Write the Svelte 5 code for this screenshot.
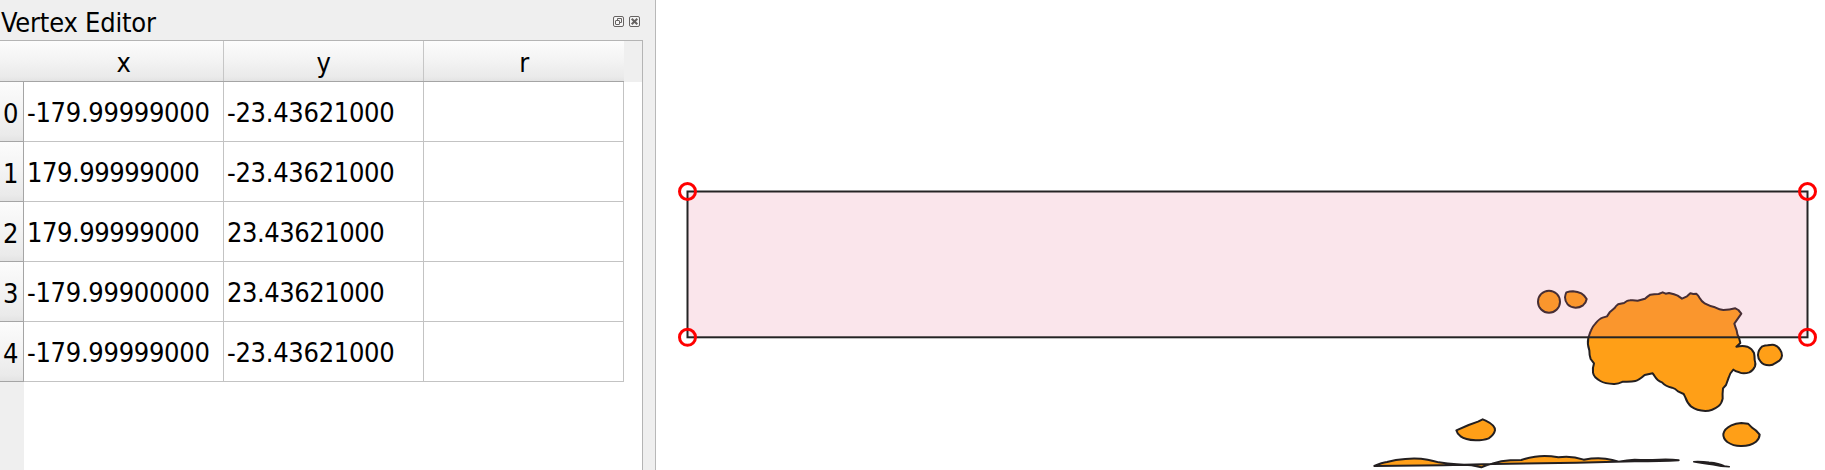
<script>
  const columns = ['x', 'y', 'r'];
  const rows = [
    ['-179.99999000', '-23.43621000', ''],
    ['179.99999000', '-23.43621000', ''],
    ['179.99999000', '23.43621000', ''],
    ['-179.99900000', '23.43621000', ''],
    ['-179.99999000', '-23.43621000', '']
  ];
  const handles = [[687.5, 191.5], [1807.5, 191.5], [687.5, 337.3], [1807.5, 337.3]];
</script>

<div class="window">
  <section class="panel">
    <header class="titlebar">
      <span class="title">Vertex Editor</span>
      <div class="tools">
        <svg width="11" height="11" viewBox="0 0 11 11" fill="none" stroke="#666362">
          <rect x=".5" y=".5" width="10" height="10" rx="1.5" fill="#f5f5f5" />
          <path d="M4.5 4.5v-2h4v4h-2" />
          <rect x="2.5" y="4.5" width="4" height="4" rx=".5" />
        </svg>
        <svg width="11" height="11" viewBox="0 0 11 11" fill="none" stroke="#666362">
          <rect x=".5" y=".5" width="10" height="10" rx="1.5" fill="#f5f5f5" />
          <path d="M2.7 2.7l5.6 5.6M8.3 2.7L2.7 8.3" stroke-width="2" />
        </svg>
      </div>
    </header>
    <div class="table">
      <div class="head">
        {#each columns as column}
          <div class="heading">{column}</div>
        {/each}
      </div>
      <div class="body">
        {#each rows as row, i}
          <div class="row">
            <div class="index">{i}</div>
            {#each row as value}
              <div class="cell" class:negative={value.startsWith('-')}>{value}</div>
            {/each}
          </div>
        {/each}
        <div class="gutter"></div>
      </div>
    </div>
  </section>

  <svg class="map" width="1169" height="470" viewBox="656 0 1169 470">
    <g transform="translate(1520 270) scale(.33333)" fill="#ff9f17" stroke="#231f20" stroke-width="6" stroke-linejoin="round">
      <ellipse cx="87" cy="95" rx="33" ry="33" />
      <path d="M139 67Q149 64 159 64Q173 65 184 70Q193 75 200 87Q198 99 189 106Q179 113 167 113Q151 112 143 103Q135 94 135 82Q136 73 139 67Z" />
      <path d="M205 204Q209 190 213 181Q218 169 226 161Q238 146 248 143L261 139L269 127L283 115Q289 106 294 103L312 99Q322 91 330 91Q342 90 353 92L375 86Q382 80 391 74Q402 72 416 72L428 67L437 71L447 69Q464 73 473 77L486 86L501 79L511 70L520 72L529 71Q535 76 539 84Q545 95 554 100Q569 108 585 112Q599 119 610 120Q628 120 646 115L655 120L664 131L643 161Q647 174 650 181Q651 194 657 203L661 219L649 230Q668 226 682 230Q696 236 702 249Q704 258 704 270Q708 282 705 289Q699 302 688 307Q670 313 658 307Q645 304 640 299Q630 309 626 323Q621 337 618 345L609 355Q607 373 608 386Q605 401 596 408Q577 423 556 423Q530 422 514 410Q502 400 496 382L491 372L474 364Q466 356 456 353Q437 349 426 337Q412 332 403 317L398 310L374 315Q356 331 346 333Q334 336 309 335Q293 343 281 342Q255 341 241 333Q221 322 219 308Q217 295 222 280L212 267Q208 258 208 241Q201 222 205 204Z" />
      <path d="M727 229Q736 226 743 226Q757 223 763 225Q774 228 780 239Q786 247 786 257Q785 267 778 272L765 280Q757 287 747 286Q730 286 722 275Q714 267 714 255Q715 239 727 229Z" />
      <path d="M634 466Q647 460 664 459L684 461L696 473Q710 481 719 494Q718 507 708 515Q691 528 665 528Q641 529 622 516Q609 505 610 492Q613 476 634 466Z" />
    </g>
    <g transform="translate(1360 400) scale(.33333)" fill="#ff9f17" stroke="#231f20" stroke-width="6" stroke-linejoin="round">
      <path d="M289 91L326 75L354 65L368 58L377 62Q406 76 405 91Q402 105 386 115Q371 121 347 121Q315 119 302 109Q292 103 289 91Z" />
      <path d="M43 198Q66 188 81 186Q107 179 136 177Q172 174 203 179Q220 182 236 187Q263 191 290 193L335 196L364 202Q379 195 396 191Q424 182 451 181L484 180Q503 173 525 170Q558 165 595 172Q633 166 671 179Q720 170 757 180L776 185Q801 181 824 179Q850 181 878 180Q925 176 956 181Q907 184 824 184L650 188L400 192L250 196Z" />
      <path d="M1001 185Q1025 184 1047 187Q1078 190 1093 198L1108 200Q1083 200 1060 194Q1025 190 1001 185Z" fill="#231f20" stroke-width="4.5" />
    </g>
    <rect x="687.5" y="191.5" width="1120" height="145.8" fill="rgba(228,114,147,.185)" stroke="#242424" stroke-width="2" />
    {#each handles as [x, y]}
      <circle cx={x} cy={y} r="8" fill="none" stroke="#f00" stroke-width="3" />
    {/each}
  </svg>
</div>

<style>
  :global(body) { margin: 0; background: #fff; }
  .window {
    display: flex;
    width: 1825px;
    height: 470px;
    overflow: hidden;
    background: #fff;
    color: #000;
    font: 27px/32px "DejaVu Sans Condensed", "DejaVu Sans", sans-serif;
    font-stretch: condensed;
    letter-spacing: -.46px;
  }
  .panel {
    box-sizing: border-box;
    display: flex;
    flex-direction: column;
    flex: none;
    width: 656px;
    padding-right: 12px;
    background: #efefef;
    border-right: 1px solid #b8b8b8;
  }
  .titlebar {
    box-sizing: border-box;
    display: flex;
    justify-content: space-between;
    height: 40px;
    padding: 6px 3px 0 1px;
  }
  .title { padding-top: 1px; letter-spacing: -.2px; }
  .tools { display: flex; gap: 5px; padding-top: 10px; }
  .tools svg { display: block; }
  .table {
    display: flex;
    flex-direction: column;
    flex: 1;
    border-top: 1px solid #b4b4b4;
    border-right: 1px solid #b4b4b4;
  }
  .head {
    box-sizing: border-box;
    display: grid;
    grid-template-columns: 224px 200px 200px;
    width: 624px;
    height: 41px;
    border-bottom: 1px solid #a5a5a5;
    background: linear-gradient(#fcfcfc, #f3f3f3 50%, #eaeaea 90%, #e3e3e3);
  }
  .heading {
    padding-top: 6px;
    text-align: center;
    border-right: 1px solid #c6c6c6;
  }
  .heading:first-child { padding-left: 24px; }
  .heading:last-child { border-right: 0; }
  .body { display: flex; flex-direction: column; flex: 1; background: #fff; }
  .row {
    display: grid;
    grid-template-columns: 24px 200px 200px 200px;
    width: 624px;
    height: 60px;
  }
  .index, .cell { box-sizing: border-box; white-space: nowrap; }
  .index {
    padding: 16px 0 0 3px;
    border-right: 1px solid #a5a5a5;
    border-bottom: 1px solid #a5a5a5;
    background: linear-gradient(#fcfcfc, #f3f3f3 50%, #eaeaea 90%, #e3e3e3);
  }
  .cell {
    padding: 15px 0 0 3px;
    border-right: 1px solid #c3c3c3;
    border-bottom: 1px solid #c3c3c3;
  }
  .negative { letter-spacing: -.3px; }
  .gutter { flex: 1; width: 24px; background: #efefef; }
  .map { display: block; flex: none; }
</style>
